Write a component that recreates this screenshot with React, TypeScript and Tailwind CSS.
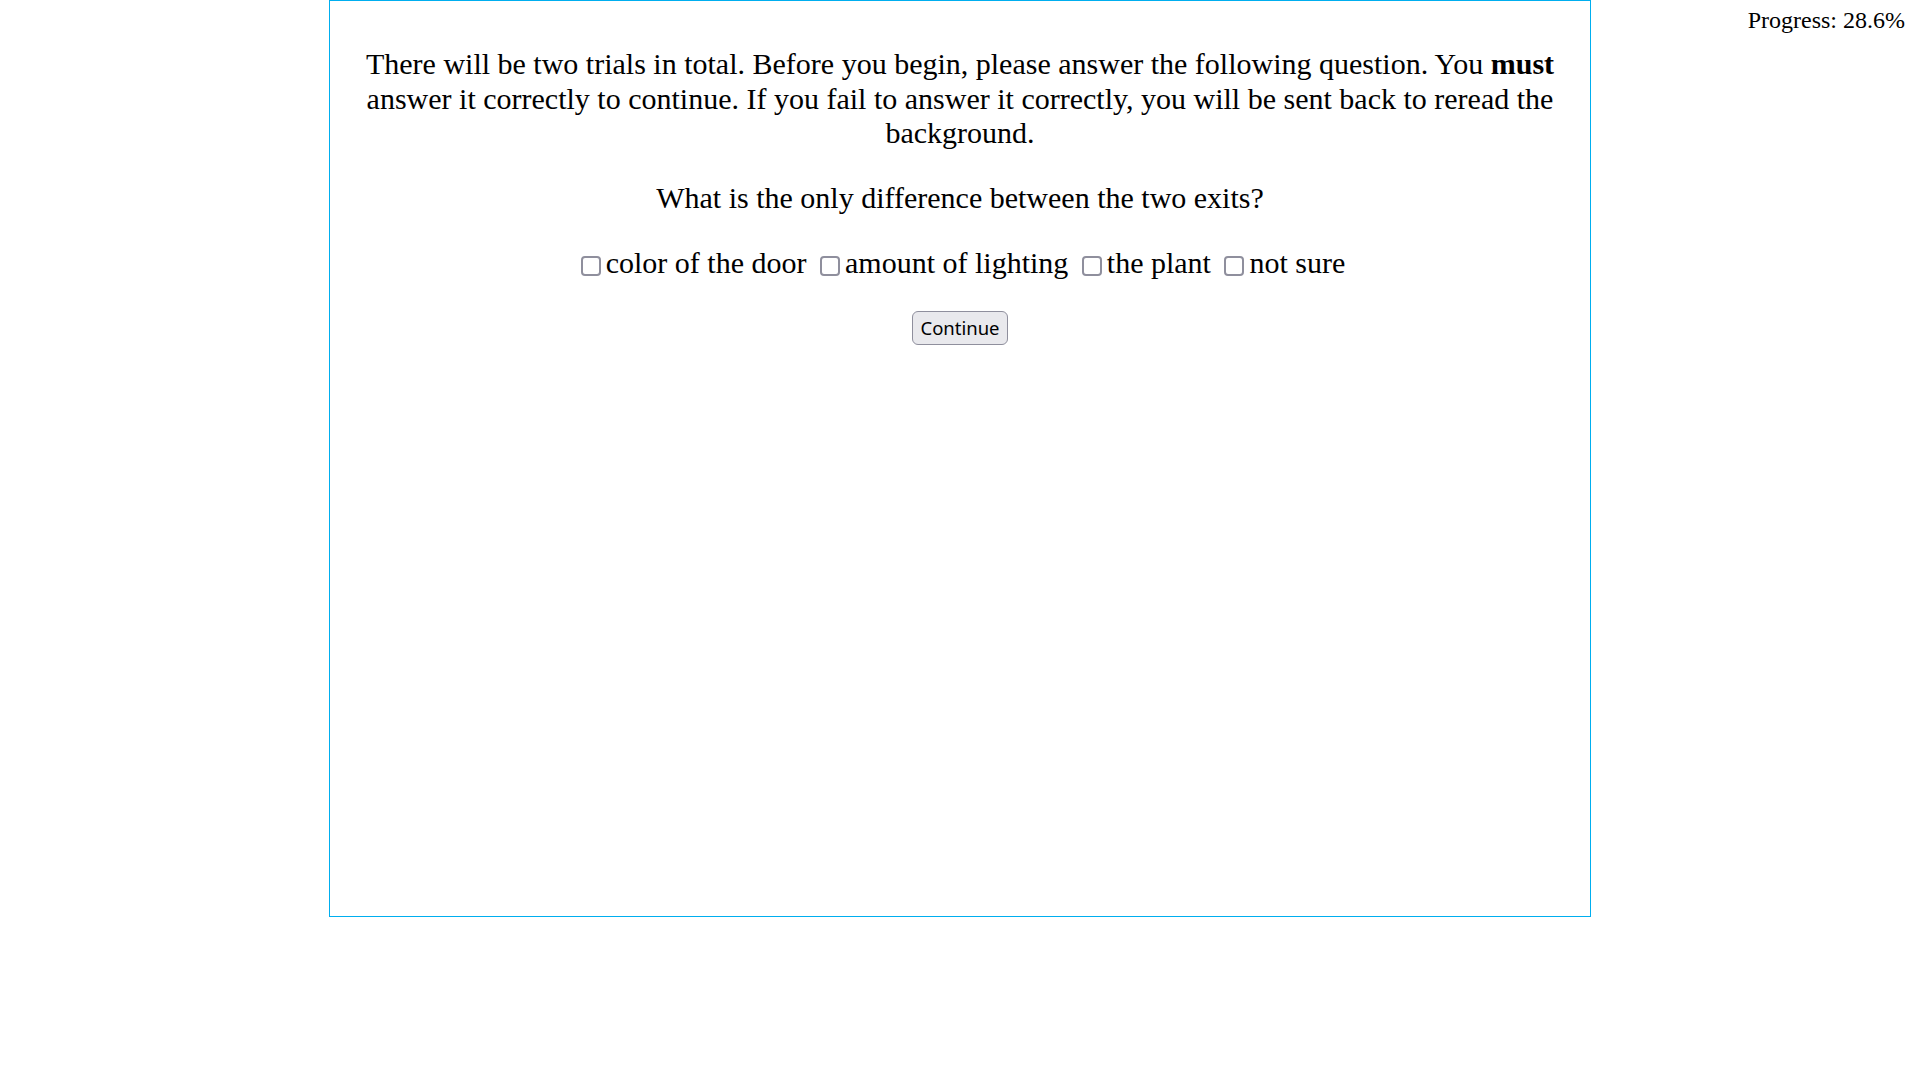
import { useState } from 'react';

const options = ['color of the door', 'amount of lighting', 'the plant', 'not sure'];

export default function App() {
    const [checked, setChecked] = useState<Record<string, boolean>>({});

    const toggle = (opt: string) => {
        setChecked(prev => ({ ...prev, [opt]: !prev[opt] }));
    };

    return (
        <div className="relative w-full min-h-[1080px] bg-white text-black font-['Liberation_Serif',serif]">
            {/* progress readout, top right */}
            <div className="absolute right-[15px] top-[6px] text-[24px] leading-[28px]">Progress: 28.6%</div>

            <div className="mx-auto w-[1262px] h-[917px] border-[1.5px] border-[#00aeef] px-[15px] pt-[16px] pb-[15px] text-center text-[30px] leading-[34.5px]">
                <p className="my-[30px]">
                    There will be two trials in total. Before you begin, please answer the following question. You{' '}
                    <b>must</b> answer it correctly to continue. If you fail to answer it correctly, you will be sent
                    back to reread the background.
                </p>

                <p className="my-[30px]">What is the only difference between the two exits?</p>

                <p className="my-[30px] leading-[36px]">
                    {options.map((opt, i) => (
                        <span key={opt}>
                            <label className="cursor-pointer">
                                <span
                                    onClick={() => toggle(opt)}
                                    className={
                                        'inline-block align-[-3px] w-[20px] h-[20px] ml-[6px] mr-[5px] rounded-[4px] border-[2.5px] border-[#8f8f9d] ' +
                                        (checked[opt] ? 'bg-[#0075ff]' : 'bg-white')
                                    }
                                />
                                {opt}
                            </label>
                            {i < options.length - 1 ? ' ' : ''}
                        </span>
                    ))}
                </p>

                <button
                    type="button"
                    className="block mx-auto mt-[1px] w-[96px] h-[34px] bg-[#e9e9ed] border-[1.5px] border-[#8f8f9d] rounded-[6px] text-[18.5px] leading-[24px] font-['Noto_Sans',sans-serif] hover:bg-[#d0d0d7]"
                >
                    Continue
                </button>
            </div>
        </div>
    );
}
